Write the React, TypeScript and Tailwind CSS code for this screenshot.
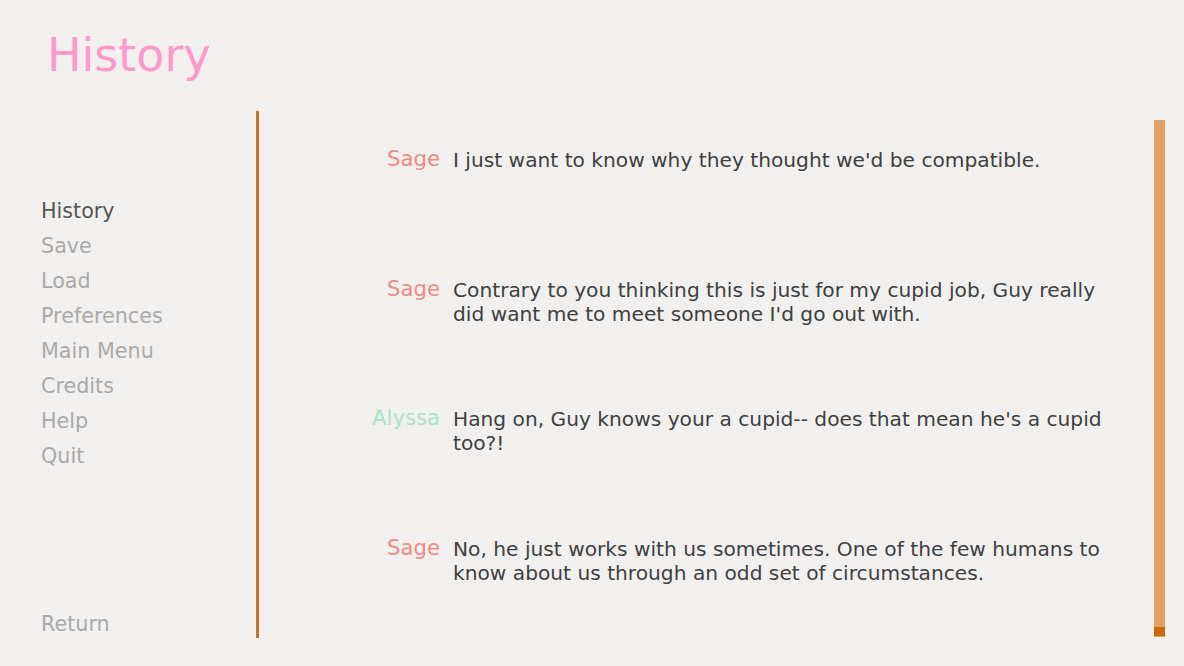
import React from "react";

const navItems = ["History", "Save", "Load", "Preferences", "Main Menu", "Credits", "Help", "Quit"];

const entries = [
  { who: "Sage", color: "text-[#ee8c82]", what: "I just want to know why they thought we'd be compatible." },
  {
    who: "Sage",
    color: "text-[#ee8c82]",
    what: "Contrary to you thinking this is just for my cupid job, Guy really did want me to meet someone I'd go out with.",
  },
  {
    who: "Alyssa",
    color: "text-[#a9e5c6]",
    what: "Hang on, Guy knows your a cupid-- does that mean he's a cupid too?!",
  },
  {
    who: "Sage",
    color: "text-[#ee8c82]",
    what: "No, he just works with us sometimes. One of the few humans to know about us through an odd set of circumstances.",
  },
];

export default function App() {
  return (
    <div className="w-[1184px] h-[666px] overflow-hidden bg-[#f2f0ef] font-['DejaVu_Sans',sans-serif]">
      {/* Title */}
      <div className="h-[111px] pl-[47px] pt-[32px]">
        <h1 className="text-[46px] leading-none text-[#ff99cc]">History</h1>
      </div>

      <div className="flex h-[527px]">
        {/* Navigation */}
        <div className="w-[256px] shrink-0 pl-[41px] pt-[83px] flex flex-col">
          {navItems.map((item) => (
            <div
              key={item}
              className={`h-[35.15px] leading-[35px] text-[20.7px] ${
                item === "History" ? "text-[#555555]" : "text-[#aaaaaa]"
              }`}
            >
              {item}
            </div>
          ))}
          <div className="mt-[133px] h-[35px] leading-[35px] text-[20.7px] text-[#aaaaaa]">Return</div>
        </div>

        {/* Divider */}
        <div className="w-[3px] shrink-0 bg-[#c8722a]" />

        {/* History entries */}
        <div className="flex-1 pl-[37px] pt-[35px]">
          {entries.map((e, i) => (
            <div key={i} className="flex h-[129.5px]">
              <div className={`w-[144px] shrink-0 text-right text-[21.2px] leading-[24px] mt-[1px] ${e.color}`}>
                {e.who}
              </div>
              <div className="ml-[13px] w-[660px] mt-[2px] text-[20.2px] leading-[24px] text-[#404040]">{e.what}</div>
            </div>
          ))}
        </div>

        {/* Scrollbar */}
        <div className="mt-[9px] mr-[19px] w-[11px] h-[517px] shrink-0 bg-[#e0a064] flex flex-col justify-end">
          <div className="h-[9px] mb-[1px] bg-[#cc6a0a]" />
        </div>
      </div>
    </div>
  );
}
